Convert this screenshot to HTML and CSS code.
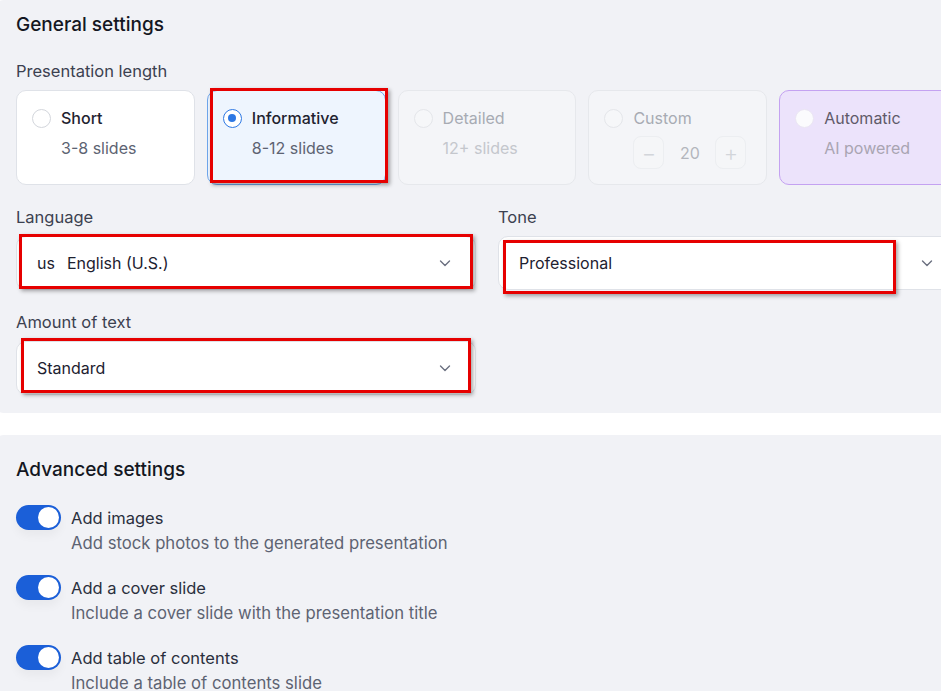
FILE: index.html
```html
<!DOCTYPE html>
<html lang="en">
<head>
  <meta charset="UTF-8">
  <meta name="viewport" content="width=device-width, initial-scale=1.0">
  <title>Presentation settings</title>
  <link rel="stylesheet" href="styles.css">
</head>
<body>
  <div class="page">

    <!-- General settings -->
    <section class="panel general">
      <h2 class="panel-title">General settings</h2>

      <div class="field">
        <div class="field-label">Presentation length</div>
        <div class="length-options">
          <div class="option">
            <span class="radio"></span>
            <div class="option-text">
              <div class="option-title">Short</div>
              <div class="option-sub">3-8 slides</div>
            </div>
          </div>
          <div class="option selected">
            <span class="radio"></span>
            <div class="option-text">
              <div class="option-title">Informative</div>
              <div class="option-sub">8-12 slides</div>
            </div>
          </div>
          <div class="option disabled">
            <span class="radio"></span>
            <div class="option-text">
              <div class="option-title">Detailed</div>
              <div class="option-sub">12+ slides</div>
            </div>
          </div>
          <div class="option disabled">
            <span class="radio"></span>
            <div class="option-text">
              <div class="option-title">Custom</div>
              <div class="stepper">
                <span class="step-btn">&minus;</span>
                <span class="step-value">20</span>
                <span class="step-btn">+</span>
              </div>
            </div>
          </div>
          <div class="option auto">
            <span class="radio"></span>
            <div class="option-text">
              <div class="option-title">Automatic</div>
              <div class="option-sub">AI powered</div>
            </div>
          </div>
        </div>
      </div>

      <div class="field-row">
        <div class="field">
          <div class="field-label">Language</div>
          <div class="select">
            <span class="select-value"><span class="flag">us</span>English (U.S.)</span>
            <svg class="chevron" width="12" height="12" viewBox="0 0 12 12"><polyline points="1.5,4 6,8.5 10.5,4" /></svg>
          </div>
        </div>
        <div class="field">
          <div class="field-label">Tone</div>
          <div class="select">
            <span class="select-value">Professional</span>
            <svg class="chevron" width="12" height="12" viewBox="0 0 12 12"><polyline points="1.5,4 6,8.5 10.5,4" /></svg>
          </div>
        </div>
      </div>

      <div class="field-row">
        <div class="field">
          <div class="field-label">Amount of text</div>
          <div class="select">
            <span class="select-value">Standard</span>
            <svg class="chevron" width="12" height="12" viewBox="0 0 12 12"><polyline points="1.5,4 6,8.5 10.5,4" /></svg>
          </div>
        </div>
      </div>
    </section>

    <!-- Advanced settings -->
    <section class="panel advanced">
      <h2 class="panel-title">Advanced settings</h2>

      <div class="toggle-row">
        <span class="toggle on"><span class="knob"></span></span>
        <div class="toggle-text">
          <div class="toggle-title">Add images</div>
          <div class="toggle-sub">Add stock photos to the generated presentation</div>
        </div>
      </div>
      <div class="toggle-row">
        <span class="toggle on"><span class="knob"></span></span>
        <div class="toggle-text">
          <div class="toggle-title">Add a cover slide</div>
          <div class="toggle-sub">Include a cover slide with the presentation title</div>
        </div>
      </div>
      <div class="toggle-row">
        <span class="toggle on"><span class="knob"></span></span>
        <div class="toggle-text">
          <div class="toggle-title">Add table of contents</div>
          <div class="toggle-sub">Include a table of contents slide</div>
        </div>
      </div>
    </section>

    <!-- red review marks drawn over the screenshot -->
    <div class="mark mark-length"></div>
    <div class="mark mark-language"></div>
    <div class="mark mark-tone"></div>
    <div class="mark mark-amount"></div>
  </div>
</body>
</html>
```

FILE: styles.css
```css
/* General */
html, body {
  margin: 0;
  padding: 0;
}

body {
  background: #ffffff;
  font-family: "Inter", "Noto Sans", sans-serif;
  color: #1d2130;
  overflow: hidden;
  width: 941px;
  height: 691px;
}

.page {
  position: relative;
}

/* Panels */
.panel {
  background: #f1f2f6;
  border-radius: 12px;
  margin-left: -8px;
  padding: 0 16px 0 24px;
  width: 942px;
}

.general {
  padding-top: 12px;
  padding-bottom: 18px;
}

.advanced {
  margin-top: 22px;
  padding-top: 22px;
  height: 300px;
}

.panel-title {
  margin: 0;
  font-size: 19px;
  line-height: 26px;
  font-weight: 500;
  color: #141722;
}

.general .panel-title {
  margin-bottom: 23px;
}

.advanced .panel-title {
  margin-bottom: 22px;
}

/* Fields */
.field-label {
  font-size: 16.5px;
  line-height: 20px;
  color: #3c4150;
  margin-bottom: 9px;
}

.field-row {
  display: grid;
  grid-template-columns: 460px 460px;
  gap: 22px;
  margin-top: 22px;
}

/* Length options */
.length-options {
  display: grid;
  grid-template-columns: repeat(5, 1fr);
  gap: 12px;
}

.option {
  box-sizing: border-box;
  height: 95px;
  background: #ffffff;
  border: 1px solid #dfe2e8;
  border-radius: 10px;
  padding: 17px 15px;
  display: flex;
  gap: 10px;
}

.radio {
  box-sizing: border-box;
  width: 19px;
  height: 19px;
  flex: none;
  border-radius: 50%;
  border: 1.5px solid #d3d6dc;
  background: #ffffff;
  margin-top: 0.5px;
  position: relative;
}

.option-title {
  font-size: 16px;
  line-height: 20px;
  font-weight: 500;
  color: #1f2330;
}

.option-sub {
  margin-top: 10px;
  font-size: 16px;
  line-height: 20px;
  color: #5d6372;
}

.option.selected {
  background: #eef5fe;
  border-color: #6ea5ea;
}

.option.selected .radio {
  border-color: #2d78e4;
}

.option.selected .radio::after {
  content: "";
  position: absolute;
  left: 4px;
  top: 4px;
  width: 8px;
  height: 8px;
  border-radius: 50%;
  background: #2d78e4;
}

.option.disabled {
  background: #f4f5f8;
  border-color: #e6e8ec;
}

.option.disabled .radio {
  background: #f6f7f9;
  border-color: #e4e6ea;
}

.option.disabled .option-title {
  color: #a7abb3;
  font-weight: 400;
}

.option.disabled .option-sub {
  color: #c4c7cd;
}

.option.auto {
  background: #ece3fb;
  border-color: #c4a2f1;
}

.option.auto .radio {
  border-color: #ebe6f3;
  background: #fbfbfd;
}

.option.auto .option-title {
  color: #5f5a69;
  font-weight: 400;
}

.option.auto .option-sub {
  color: #a9a5b2;
}

/* Custom stepper */
.stepper {
  display: flex;
  align-items: center;
  margin-top: 8px;
}

.step-btn {
  box-sizing: border-box;
  width: 31px;
  height: 33px;
  border: 1px solid #eceef1;
  border-radius: 8px;
  background: #f5f6f8;
  color: #d2d5da;
  font-size: 22px;
  font-weight: 300;
  display: flex;
  align-items: center;
  justify-content: center;
}

.step-value {
  width: 51px;
  text-align: center;
  font-size: 16px;
  color: #b3b6bd;
}

/* Selects */
.select {
  box-sizing: border-box;
  height: 54px;
  background: #ffffff;
  border: 1px solid #dfe2e8;
  border-radius: 10px;
  padding: 0 24px 0 20px;
  display: flex;
  align-items: center;
  justify-content: space-between;
}

.select-value {
  font-size: 16px;
  color: #1d2130;
}

.flag {
  margin-right: 12px;
}

.chevron polyline {
  fill: none;
  stroke: #6b7080;
  stroke-width: 1.4;
  stroke-linecap: round;
  stroke-linejoin: round;
}

/* Toggles */
.toggle-row {
  display: flex;
  gap: 10px;
  margin-bottom: 22px;
}

.toggle {
  width: 45px;
  height: 25px;
  flex: none;
  border-radius: 13px;
  background: #1b5fd8;
  position: relative;
  box-shadow: 0 6px 10px rgba(0, 0, 0, 0.04);
}

.toggle .knob {
  position: absolute;
  right: 2px;
  top: 2px;
  width: 21px;
  height: 21px;
  border-radius: 50%;
  background: #ffffff;
}

.toggle-text {
  margin-top: 3px;
}

.toggle-title {
  font-size: 16.5px;
  line-height: 20px;
  color: #2a2f3d;
}

.toggle-sub {
  margin-top: 5px;
  font-size: 16.7px;
  line-height: 20px;
  color: #5d6372;
}

/* Red review marks */
.mark {
  position: absolute;
  box-sizing: border-box;
  border: 3px solid #e60000;
  box-shadow: 2px 2px 4px rgba(0, 0, 0, 0.35);
}

.mark-length {
  left: 210px;
  top: 88px;
  width: 178px;
  height: 95px;
}

.mark-language {
  left: 19px;
  top: 234px;
  width: 454px;
  height: 55px;
}

.mark-tone {
  left: 503px;
  top: 240px;
  width: 393px;
  height: 54px;
}

.mark-amount {
  left: 21px;
  top: 338px;
  width: 450px;
  height: 55px;
}
```
